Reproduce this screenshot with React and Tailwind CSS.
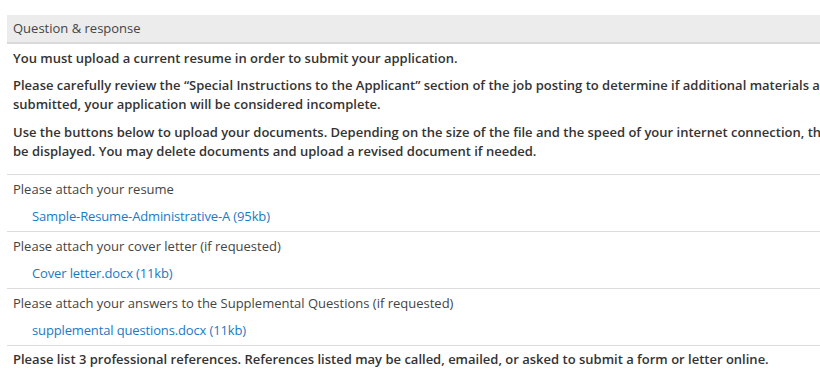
import React from "react";

const rows = [
  { label: "Please attach your resume", file: "Sample-Resume-Administrative-A (95kb)" },
  { label: "Please attach your cover letter (if requested)", file: "Cover letter.docx (11kb)" },
  {
    label: "Please attach your answers to the Supplemental Questions (if requested)",
    file: "supplemental questions.docx (11kb)",
  },
];

const App = () => {
  return (
    <div className="min-h-screen bg-white overflow-hidden pt-[15px] pl-[7px] font-['Open_Sans',sans-serif] text-[13px] leading-[19px]">
      <div className="w-[1000px]">
        {/* Section header */}
        <div className="h-[29px] bg-[#ececec] border-b-2 border-[#d9d9d9] px-[6px] flex items-center text-[#444]">
          Question &amp; response
        </div>

        {/* Instructions */}
        <div className="px-[6px] pt-[5px] pb-[13px] text-[#333] font-semibold whitespace-nowrap">
          <p>You must upload a current resume in order to submit your application.</p>
          <p className="mt-[8px]">
            Please carefully review the “Special Instructions to the Applicant” section of the job posting to determine if additional materials are required. If additional materials are required and not
            <br />
            submitted, your application will be considered incomplete.
          </p>
          <p className="mt-[9px]">
            Use the buttons below to upload your documents. Depending on the size of the file and the speed of your internet connection, this may take a few moments for your document to
            <br />
            be displayed. You may delete documents and upload a revised document if needed.
          </p>
        </div>

        {/* Attachments */}
        {rows.map((r) => (
          <div key={r.label} className="border-t border-[#dcdcdc] px-[6px] pt-[5px] pb-[5px]">
            <div className="text-[#444]">{r.label}</div>
            <a href="#" className="block mt-[8px] pl-[19px] text-[#1a7ac4] tracking-[-0.14px]">
              {r.file}
            </a>
          </div>
        ))}

        <div className="border-t border-[#dcdcdc] px-[6px] pt-[4px] text-[#333] font-semibold">
          Please list 3 professional references. References listed may be called, emailed, or asked to submit a form or letter online.
        </div>
      </div>
    </div>
  );
};

export default App;
